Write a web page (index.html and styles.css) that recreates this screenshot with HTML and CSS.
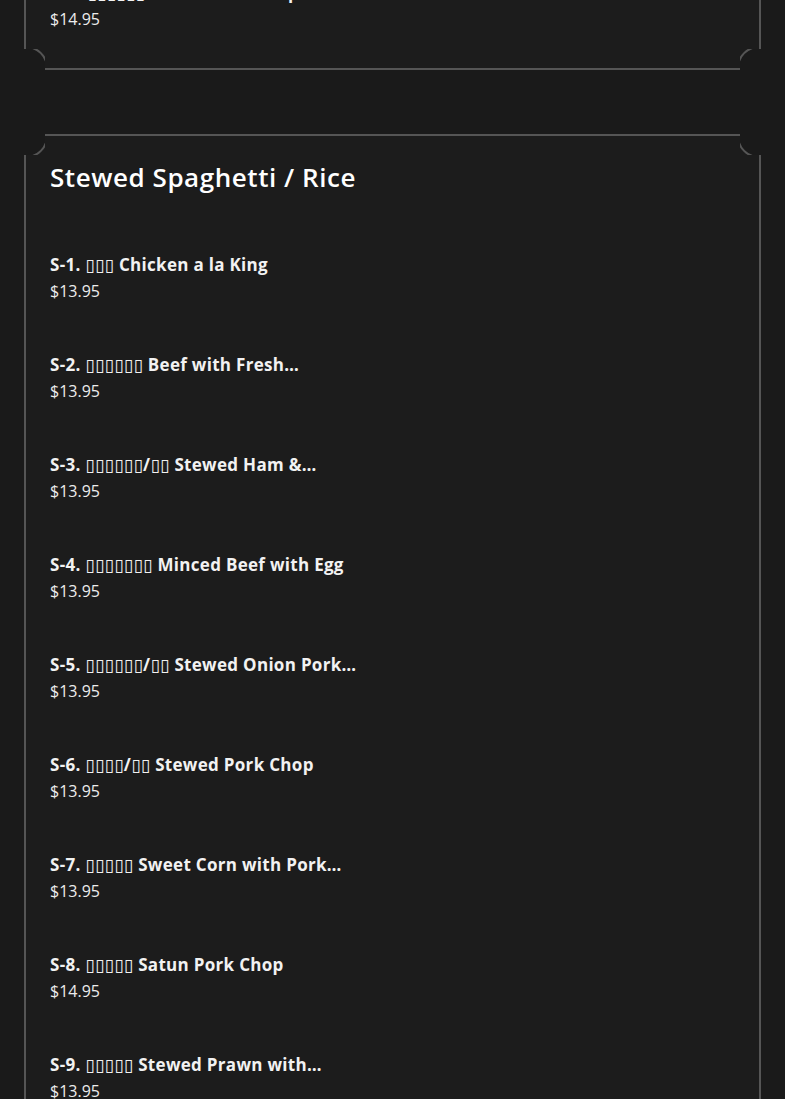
FILE: index.html
```html
<!DOCTYPE html>
<html lang="en">
<head>
<meta charset="utf-8">
<title>Menu</title>
<link rel="stylesheet" href="styles.css">
</head>
<body>
<main class="page">
  <section class="card card--tail">
    <span class="corner corner--tl"></span><span class="corner corner--tr"></span>
    <span class="corner corner--bl"></span><span class="corner corner--br"></span>
    <div class="item">
      <div class="item__name">B-9. <span class="cjk">▯▯▯▯▯▯</span> Baked Pork Chop with Rice</div>
      <div class="item__price">$14.95</div>
    </div>
  </section>

  <section class="card">
    <span class="corner corner--tl"></span><span class="corner corner--tr"></span>
    <span class="corner corner--bl"></span><span class="corner corner--br"></span>
    <h2 class="card__title">Stewed Spaghetti / Rice</h2>
    <div class="items">
      <div class="item">
        <div class="item__name">S-1. <span class="cjk">▯▯▯</span> Chicken a la King</div>
        <div class="item__price">$13.95</div>
      </div>
      <div class="item">
        <div class="item__name">S-2. <span class="cjk">▯▯▯▯▯▯</span> Beef with Fresh Tomatoes</div>
        <div class="item__price">$13.95</div>
      </div>
      <div class="item">
        <div class="item__name">S-3. <span class="cjk">▯▯▯▯▯▯</span>/<span class="cjk">▯▯</span> Stewed Ham &amp; Sausage</div>
        <div class="item__price">$13.95</div>
      </div>
      <div class="item">
        <div class="item__name">S-4. <span class="cjk">▯▯▯▯▯▯▯</span> Minced Beef with Egg</div>
        <div class="item__price">$13.95</div>
      </div>
      <div class="item">
        <div class="item__name">S-5. <span class="cjk">▯▯▯▯▯▯</span>/<span class="cjk">▯▯</span> Stewed Onion Pork Chop</div>
        <div class="item__price">$13.95</div>
      </div>
      <div class="item">
        <div class="item__name">S-6. <span class="cjk">▯▯▯▯</span>/<span class="cjk">▯▯</span> Stewed Pork Chop</div>
        <div class="item__price">$13.95</div>
      </div>
      <div class="item">
        <div class="item__name">S-7. <span class="cjk">▯▯▯▯▯</span> Sweet Corn with Pork Chop</div>
        <div class="item__price">$13.95</div>
      </div>
      <div class="item">
        <div class="item__name">S-8. <span class="cjk">▯▯▯▯▯</span> Satun Pork Chop</div>
        <div class="item__price">$14.95</div>
      </div>
      <div class="item">
        <div class="item__name">S-9. <span class="cjk">▯▯▯▯▯</span> Stewed Prawn with Tomato</div>
        <div class="item__price">$13.95</div>
      </div>
    </div>
  </section>
</main>
</body>
</html>
```
FILE: styles.css
```css
* { box-sizing: border-box; }

body {
  margin: 0;
  background: #1a1a1a;
  color: #ffffff;
  font-family: "Open Sans", "Noto Sans", sans-serif;
}

.page {
  padding: 0 24px 40px;
}

.card {
  position: relative;
  border: 2px solid #555555;
  background: #1c1c1c;
  padding: 24px 24px 36px;
}

.card--tail {
  margin-top: -46px;
}

.card + .card {
  margin-top: 64px;
}

.corner {
  position: absolute;
  width: 21px;
  height: 21px;
  overflow: hidden;
}

.corner::before {
  content: "";
  position: absolute;
  width: 40px;
  height: 40px;
  border: 2px solid #555555;
  border-radius: 50%;
  background: #1a1a1a;
}

.corner--tl { top: -2px; left: -2px; }
.corner--tl::before { top: -20px; left: -20px; }
.corner--tr { top: -2px; right: -2px; }
.corner--tr::before { top: -20px; right: -20px; }
.corner--bl { bottom: -2px; left: -2px; }
.corner--bl::before { bottom: -20px; left: -20px; }
.corner--br { bottom: -2px; right: -2px; }
.corner--br::before { bottom: -20px; right: -20px; }

.card__title {
  margin: 0 0 58px;
  font-size: 26px;
  line-height: 34px;
  font-weight: 600;
  letter-spacing: 0.55px;
  color: #ffffff;
}

.items {
  display: flex;
  flex-direction: column;
  gap: 48px;
}

.item__name {
  max-width: 312px;
  height: 26px;
  font-size: 17px;
  line-height: 26px;
  font-weight: 700;
  letter-spacing: 0.3px;
  color: #f2f2f2;
  display: -webkit-box;
  -webkit-line-clamp: 1;
  -webkit-box-orient: vertical;
  overflow: hidden;
}

.cjk {
  font-family: "DejaVu Sans", sans-serif;
  font-size: 17.5px;
  font-weight: 400;
  line-height: 1;
  letter-spacing: 0;
}

.item__price {
  height: 26px;
  font-size: 16px;
  line-height: 26px;
  font-weight: 400;
  color: #ececec;
}
```
